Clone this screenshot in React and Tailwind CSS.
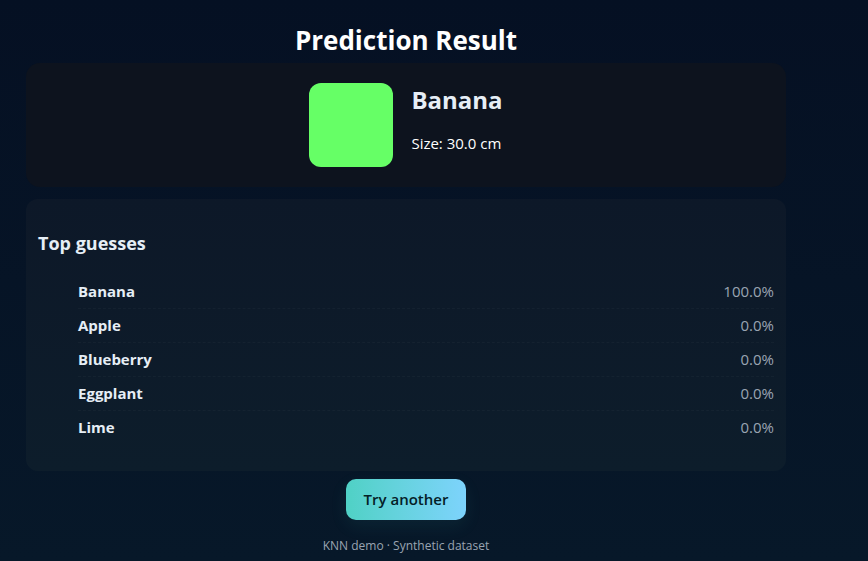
const guesses = [
  { name: "Banana", score: "100.0%" },
  { name: "Apple", score: "0.0%" },
  { name: "Blueberry", score: "0.0%" },
  { name: "Eggplant", score: "0.0%" },
  { name: "Lime", score: "0.0%" },
];

function Result() {
  return (
    <section className="flex justify-center gap-[18px] rounded-[14px] bg-[#0d131e] p-5">
      <div className="size-[84px] rounded-xl bg-[#66ff66]" />
      <div>
        <h2 className="text-2xl leading-[34px] font-bold text-[#e6eef6]">Banana</h2>
        <p className="mt-4 text-[15px] leading-5 text-white">Size: 30.0 cm</p>
      </div>
    </section>
  );
}

function Guesses() {
  return (
    <section className="mt-3 rounded-xl bg-linear-to-b from-[#0d1828] to-[#0d1d2b] px-3 pt-8 pb-[26px]">
      <h3 className="text-lg leading-6 font-bold text-[#e6eef6]">Top guesses</h3>
      <ol className="mt-5 pl-10">
        {guesses.map((g) => (
          <li
            key={g.name}
            className="flex h-[34px] items-center justify-between border-b border-dashed border-white/3 text-[15px] last:border-transparent"
          >
            <strong className="font-bold text-[#e6eef6]">{g.name}</strong>
            <span className="text-[#9aa4b2]">{g.score}</span>
          </li>
        ))}
      </ol>
    </section>
  );
}

export default function App() {
  return (
    <div className="min-h-screen bg-linear-to-b from-[#051023] to-[#071829] pr-14 font-['Open_Sans','Noto_Sans',sans-serif]">
      <main className="mx-auto flex max-w-[760px] flex-col pt-5">
        <h1 className="mb-0.5 text-center text-[26px] leading-[41px] font-bold text-white">Prediction Result</h1>
        <Result />
        <Guesses />
        <button
          type="button"
          className="mt-2 h-[41px] self-center rounded-[10px] bg-linear-to-r from-[#4fd1c5] to-[#7dd3fc] px-[18px] text-[15px] font-semibold text-[#042027] shadow-[0_6px_18px_rgba(79,209,197,0.08)]"
        >
          Try another
        </button>
        <footer className="mt-4 text-center text-xs leading-5 text-[#9aa4b2]">KNN demo · Synthetic dataset</footer>
      </main>
    </div>
  );
}
